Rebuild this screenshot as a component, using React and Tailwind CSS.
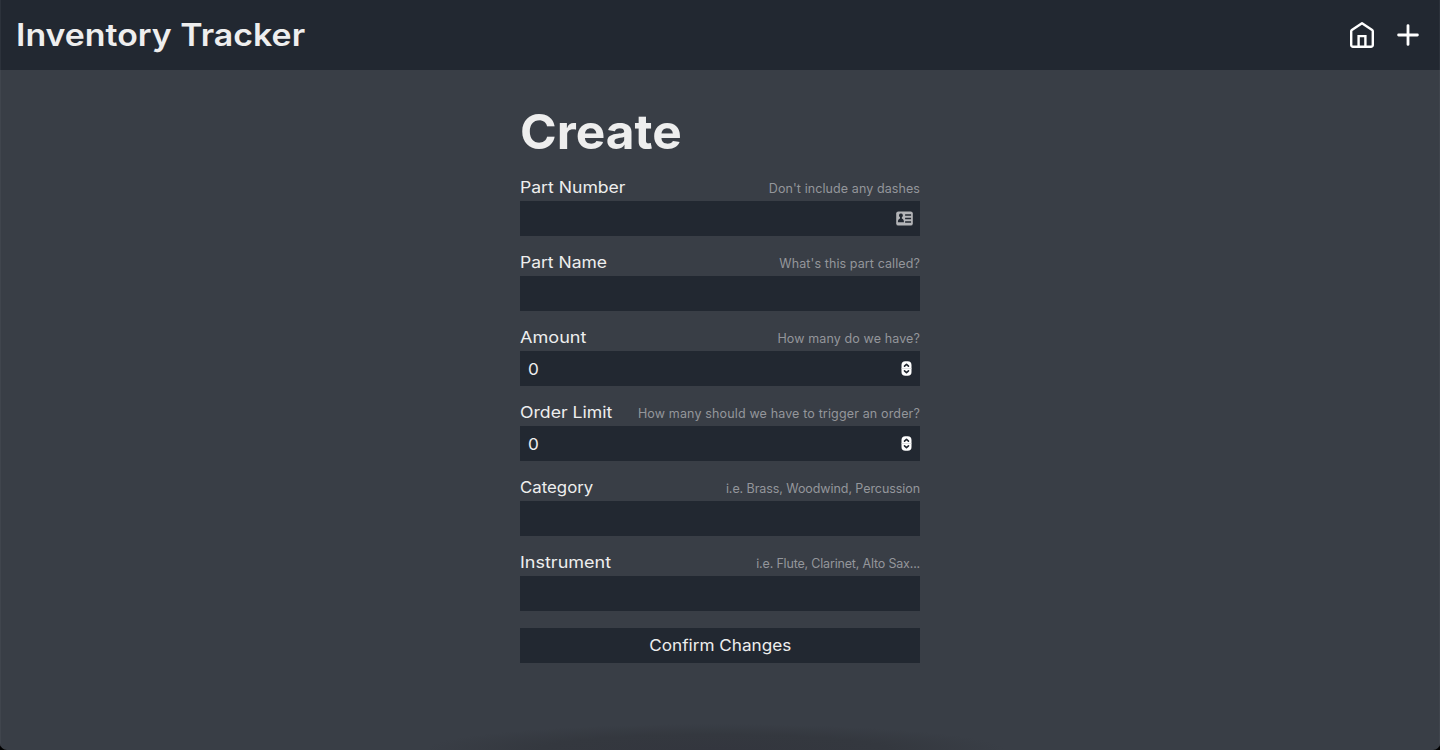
const fields = [
  { name: 'partNumber', label: 'Part Number', stretch: 'scale-x-[1.1]', hint: "Don't include any dashes", hintTrack: 'tracking-[0.09px]', kind: 'contact' },
  { name: 'partName', label: 'Part Name', stretch: 'scale-x-[1.093]', hint: "What's this part called?", hintTrack: 'tracking-[0.1px]' },
  { name: 'amount', label: 'Amount', stretch: 'scale-x-[1.13]', hint: 'How many do we have?', hintTrack: 'tracking-[0.12px]', kind: 'number' },
  { name: 'orderLimit', label: 'Order Limit', stretch: 'scale-x-[1.103]', hint: 'How many should we have to trigger an order?', hintTrack: 'tracking-[0.15px]', kind: 'number' },
  { name: 'category', label: 'Category', stretch: 'scale-x-[1.05]', hint: 'i.e. Brass, Woodwind, Percussion', hintTrack: 'tracking-[-0.07px]' },
  { name: 'instrument', label: 'Instrument', stretch: 'scale-x-[1.125]', hint: 'i.e. Flute, Clarinet, Alto Sax...', hintTrack: 'tracking-[-0.18px]' },
]

function HomeIcon() {
  return (
    <svg className="h-7 w-7" viewBox="0 0 28 28" fill="none" stroke="currentColor" strokeWidth="2.4" strokeLinejoin="round">
      <path d="M3.2 10.2a1.5 1.5 0 0 1 .65-1.2L14 2.3 24.15 9a1.5 1.5 0 0 1 .65 1.2V24a1.8 1.8 0 0 1-1.8 1.8H5A1.8 1.8 0 0 1 3.2 24Z" />
      <path d="M10.6 25.5V15.1h6.8v10.4" strokeLinejoin="miter" />
    </svg>
  )
}

function PlusIcon() {
  return (
    <svg className="h-7 w-7" viewBox="0 0 28 28" fill="none" stroke="currentColor" strokeWidth="2.8" strokeLinecap="round">
      <path d="M14 4.6v18.8M4.6 14h18.8" />
    </svg>
  )
}

function ContactIcon() {
  return (
    <svg className="h-[15px] w-[17px] shrink-0" viewBox="0 0 17 15" fill="none">
      <rect x="0.2" y="0.4" width="16.6" height="14.2" rx="2.2" fill="#b4b5b8" />
      <path d="M4.9 2.6a1.9 1.9 0 0 1 .95 3.6v1.2c1.4.4 2.1 1.4 2.1 3.9H1.9c0-2.5.7-3.5 2.1-3.9V6.2a1.9 1.9 0 0 1 .9-3.6Z" fill="#222831" />
      <path d="M9.1 4h6M9.1 7.5h6M9.1 11h6" stroke="#222831" strokeWidth="1.4" />
    </svg>
  )
}

function Stepper() {
  return (
    <svg className="mr-px h-[15px] w-[11px] shrink-0" viewBox="0 0 11 15" fill="none">
      <rect x="0.5" y="0.3" width="10" height="14.4" rx="3.8" fill="#fff" />
      <path d="M0.5 7.5h10" stroke="#d4d5d7" strokeWidth="0.7" />
      <path d="M3.5 5.2l2-1.9 2 1.9M3.5 9.8l2 1.9 2-1.9" stroke="#222831" strokeWidth="1.6" strokeLinecap="round" strokeLinejoin="round" />
    </svg>
  )
}

function Field({ name, label, stretch, hint, hintTrack, kind }) {
  return (
    <div>
      <div className="flex h-[24px] items-baseline justify-between whitespace-nowrap">
        <label htmlFor={name} className={`origin-left text-[16px] leading-[21px] ${stretch}`}>{label}</label>
        <span className={`text-[12.5px] leading-[21px] text-[#94969b] ${hintTrack}`}>{hint}</span>
      </div>
      <div className="flex h-[35px] items-center bg-[#222831] pr-[7px] pl-2">
        <input
          id={name}
          defaultValue={kind === 'number' ? '0' : ''}
          className="h-full min-w-0 flex-1 origin-left scale-x-[1.04] bg-transparent text-[16.5px] outline-none"
        />
        {kind === 'contact' && <ContactIcon />}
        {kind === 'number' && <Stepper />}
      </div>
    </div>
  )
}

export default function App() {
  return (
    <div className="h-[750px] overflow-hidden bg-black">
      <div className="flex h-full flex-col overflow-hidden rounded-b-[7px] bg-[#393e46] bg-[radial-gradient(ellipse_290px_26px_at_715px_100%,#33363e_0%,#34383f_60%,#393e4600_100%)] font-['Inter',sans-serif] text-[#eeeeee]">
        <header className="flex h-[70px] shrink-0 items-center justify-between border-x border-[#2c323b] bg-[#222831] pr-[17px] pl-[15px]">
          <h1 className="origin-left scale-x-[1.093] pb-[2px] text-[31px] leading-none font-semibold">Inventory Tracker</h1>
          <nav className="flex gap-[18px] text-white">
            <a href="#home" aria-label="Home"><HomeIcon /></a>
            <a href="#create" aria-label="Create"><PlusIcon /></a>
          </nav>
        </header>
        <main className="flex flex-1 flex-col items-center border-x border-[#40454d] pt-[38px]">
          <form className="flex w-[400px] flex-col gap-4">
            <h2 className="h-[53px] origin-left scale-x-[1.033] self-start text-[48px] leading-[48px] font-bold">Create</h2>
            {fields.map((field) => <Field key={field.name} {...field} />)}
            <button type="button" className="mt-px h-[35px] bg-[#222831] pb-px text-[16px]">
              <span className="inline-block scale-x-[1.072]">Confirm Changes</span>
            </button>
          </form>
        </main>
      </div>
    </div>
  )
}
